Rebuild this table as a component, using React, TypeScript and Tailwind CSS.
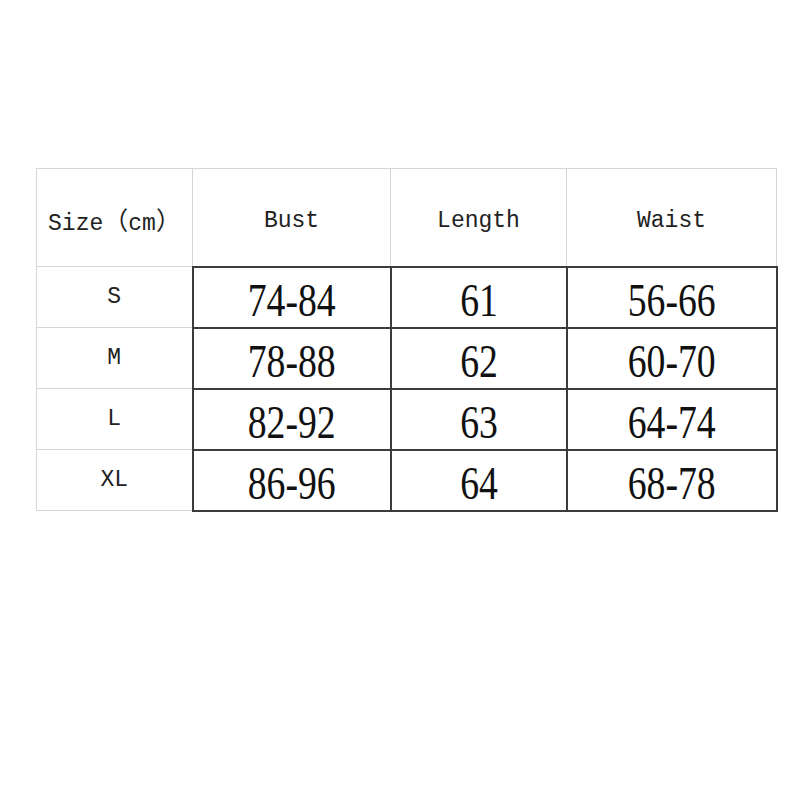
const rows = [
  { size: "S", bust: "74-84", length: "61", waist: "56-66" },
  { size: "M", bust: "78-88", length: "62", waist: "60-70" },
  { size: "L", bust: "82-92", length: "63", waist: "64-74" },
  { size: "XL", bust: "86-96", length: "64", waist: "68-78" },
];

const mono = "font-['Liberation_Mono','Noto_Sans_CJK_SC',monospace] text-[23px] text-[#222]";
const paren = "font-['Noto_Sans_CJK_SC',sans-serif] text-[25px]";
const num =
  "inline-block scale-x-[0.82] translate-y-[4px] font-['Liberation_Serif',serif] text-[46px] leading-none text-[#111]";

export default function App() {
  return (
    <div className="w-[800px] h-[800px] bg-white pt-[168px] pl-[36px]">
      <table className="table-fixed border-collapse">
        <colgroup>
          <col className="w-[156px]" />
          <col className="w-[198px]" />
          <col className="w-[176px]" />
          <col className="w-[210px]" />
        </colgroup>
        <thead>
          <tr className="h-[98px]">
            <th className={`border border-[#d6d6d6] font-normal pt-2 whitespace-nowrap ${mono}`}>
              Size<span className={paren}>（</span>cm<span className={paren}>）</span>
            </th>
            <th className={`border border-[#d6d6d6] font-normal pt-2 ${mono}`}>Bust</th>
            <th className={`border border-[#d6d6d6] font-normal pt-2 ${mono}`}>Length</th>
            <th className={`border border-[#d6d6d6] font-normal pt-2 ${mono}`}>Waist</th>
          </tr>
        </thead>
        <tbody>
          {rows.map((r) => (
            <tr key={r.size} className="h-[61px]">
              <td className={`border border-[#d6d6d6] text-center ${mono}`}>{r.size}</td>
              <td className="border-2 border-[#3c3c3c] text-center">
                <span className={num}>{r.bust}</span>
              </td>
              <td className="border-2 border-[#3c3c3c] text-center">
                <span className={num}>{r.length}</span>
              </td>
              <td className="border-2 border-[#3c3c3c] text-center">
                <span className={num}>{r.waist}</span>
              </td>
            </tr>
          ))}
        </tbody>
      </table>
    </div>
  );
}
